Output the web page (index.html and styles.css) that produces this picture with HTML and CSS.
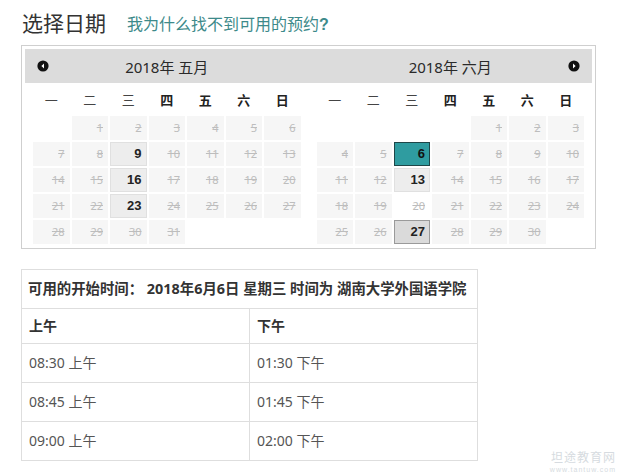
FILE: index.html
```html
<!DOCTYPE html>
<html>
<head>
<meta charset="utf-8">
<title>选择日期</title>
<link rel="stylesheet" href="styles.css">
</head>
<body>
<div class="page">
  <div class="title-row">
    <h1 class="title">选择日期</h1>
    <a class="help-link" href="#">我为什么找不到可用的预约<b>?</b></a>
  </div>

  <div class="calendar">
    <div class="cal-head">
      <div class="month-head">
        <span class="nav prev"><svg width="12" height="12" viewBox="0 0 12 12"><circle cx="6" cy="6" r="5.6" fill="#111"/><path d="M7 3.6 L4.4 6 L7 8.4 Z" fill="#fff"/></svg></span>
        <span class="month-title">2018年 五月</span>
        <span></span>
      </div>
      <div class="month-head">
        <span></span>
        <span class="month-title">2018年 六月</span>
        <span class="nav next"><svg width="12" height="12" viewBox="0 0 12 12"><circle cx="6" cy="6" r="5.6" fill="#111"/><path d="M5 3.6 L7.6 6 L5 8.4 Z" fill="#fff"/></svg></span>
      </div>
    </div>
    <div class="cal-body">
      <div class="month">
        <div class="weekdays">
          <span>一</span><span>二</span><span>三</span><span class="wk-b">四</span><span class="wk-b">五</span><span class="wk-b">六</span><span class="wk-b">日</span>
        </div>
        <div class="days">
          <span class="day empty"></span><span class="day">1</span><span class="day">2</span><span class="day">3</span><span class="day">4</span><span class="day">5</span><span class="day">6</span>
          <span class="day">7</span><span class="day">8</span><span class="day open">9</span><span class="day">10</span><span class="day">11</span><span class="day">12</span><span class="day">13</span>
          <span class="day">14</span><span class="day">15</span><span class="day open">16</span><span class="day">17</span><span class="day">18</span><span class="day">19</span><span class="day">20</span>
          <span class="day">21</span><span class="day">22</span><span class="day open">23</span><span class="day">24</span><span class="day">25</span><span class="day">26</span><span class="day">27</span>
          <span class="day">28</span><span class="day">29</span><span class="day">30</span><span class="day">31</span><span class="day empty"></span><span class="day empty"></span><span class="day empty"></span>
        </div>
      </div>
      <div class="month">
        <div class="weekdays">
          <span>一</span><span>二</span><span>三</span><span class="wk-b">四</span><span class="wk-b">五</span><span class="wk-b">六</span><span class="wk-b">日</span>
        </div>
        <div class="days">
          <span class="day empty"></span><span class="day empty"></span><span class="day empty"></span><span class="day empty"></span><span class="day">1</span><span class="day">2</span><span class="day">3</span>
          <span class="day">4</span><span class="day">5</span><span class="day open selected">6</span><span class="day">7</span><span class="day">8</span><span class="day">9</span><span class="day">10</span>
          <span class="day">11</span><span class="day">12</span><span class="day open">13</span><span class="day">14</span><span class="day">15</span><span class="day">16</span><span class="day">17</span>
          <span class="day">18</span><span class="day">19</span><span class="day plain">20</span><span class="day">21</span><span class="day">22</span><span class="day">23</span><span class="day">24</span>
          <span class="day">25</span><span class="day">26</span><span class="day open dark">27</span><span class="day">28</span><span class="day">29</span><span class="day">30</span><span class="day empty"></span>
        </div>
      </div>
    </div>
  </div>

  <table class="times">
    <tr><th class="caption" colspan="2">可用的开始时间： 2018年6月6日 星期三 时间为 湖南大学外国语学院</th></tr>
    <tr class="period-row"><th>上午</th><th>下午</th></tr>
    <tr><td>08:30 上午</td><td>01:30 下午</td></tr>
    <tr><td>08:45 上午</td><td>01:45 下午</td></tr>
    <tr><td>09:00 上午</td><td>02:00 下午</td></tr>
  </table>
</div>

<div class="watermark">
  <div class="wm-name">坦途教育网</div>
  <div class="wm-url">www.tantuw.com</div>
</div>
</body>
</html>
```

FILE: styles.css
```css
html, body {
  margin: 0;
  padding: 0;
  background: #fff;
}

body {
  font-family: "Noto Sans", "Noto Sans CJK SC", sans-serif;
  color: #333;
  position: relative;
  width: 620px;
  height: 475px;
  overflow: hidden;
}

.page {
  padding-left: 21px;
  width: 575px;
}

.title-row {
  height: 45px;
  display: flex;
  align-items: center;
  gap: 21px;
}

.title {
  margin: 0;
  padding-left: 1px;
  font-family: "Noto Sans CJK SC", sans-serif;
  font-size: 21px;
  font-weight: normal;
  color: #333;
  line-height: 1;
}

.help-link {
  font-family: "Noto Sans CJK SC", sans-serif;
  font-size: 16px;
  color: #3d8a8a;
  text-decoration: none;
  padding-top: 1px;
}

.help-link b {
  font-family: "Liberation Sans", sans-serif;
  font-weight: bold;
}

/* calendar */
.calendar {
  box-sizing: border-box;
  width: 575px;
  border: 1px solid #cfcfcf;
  padding: 3px 3px 4px;
}

.cal-head {
  background: #dcdcdc;
  height: 34px;
  display: flex;
  gap: 16px;
  padding: 0 8px;
}

.month-head {
  flex: 1;
  display: grid;
  grid-template-columns: 20px 1fr 20px;
  align-items: center;
}

.month-title {
  text-align: center;
  font-family: "Noto Sans", "Noto Sans CJK SC", sans-serif;
  font-size: 15px;
  color: #2a2a2a;
}

.nav {
  display: flex;
}

.nav.prev {
  justify-content: flex-start;
  padding-left: 4px;
}

.nav.next {
  justify-content: flex-end;
  padding-right: 4px;
}

.cal-body {
  display: flex;
  gap: 16px;
  padding: 0 8px;
}

.month {
  flex: 1;
}

.weekdays {
  height: 33px;
  display: grid;
  grid-template-columns: repeat(7, 1fr);
  gap: 2px;
  align-items: center;
  text-align: center;
  font-family: "Noto Sans CJK SC", sans-serif;
  font-size: 13px;
  color: #444;
}

.wk-b {
  font-weight: bold;
  color: #222;
}

.days {
  display: grid;
  grid-template-columns: repeat(7, 1fr);
  grid-auto-rows: 24px;
  gap: 2px;
}

.day {
  background: #f6f6f6;
  text-align: right;
  padding-right: 5px;
  line-height: 24px;
  font-family: "Noto Sans", sans-serif;
  font-size: 11px;
  color: #bdbdbd;
  text-decoration: line-through;
}

.day.empty,
.day.plain {
  background: transparent;
}

.day.open {
  background: #ededed;
  box-shadow: inset 0 0 0 1px #e0e0e0;
  color: #222;
  font-family: "Liberation Sans", sans-serif;
  font-weight: bold;
  font-size: 13px;
  text-decoration: none;
}

.day.selected {
  background: #2f9ca0;
  box-shadow: inset 0 0 0 1px #1e4648;
  color: #111;
}

.day.dark {
  background: #dadada;
  box-shadow: inset 0 0 0 1px #9a9a9a;
}

/* times table */
.times {
  margin-top: 20px;
  width: 457px;
  border-collapse: collapse;
  table-layout: fixed;
  font-family: "Noto Sans", "Noto Sans CJK SC", sans-serif;
}

.times th,
.times td {
  border: 1px solid #dedede;
  text-align: left;
  padding: 10px 7px;
  line-height: 18px;
  font-size: 14px;
}

.times th {
  color: #333;
  font-weight: bold;
}

.times th.caption {
  font-size: 14.4px;
  padding-left: 6px;
  padding-right: 2px;
  white-space: nowrap;
}

.times .period-row th {
  padding-top: 8px;
  padding-bottom: 8px;
}

.times td {
  color: #555;
}

/* watermark overlay */
.watermark {
  position: absolute;
  right: 4px;
  bottom: 1px;
  display: flex;
  flex-direction: column;
  align-items: flex-end;
  gap: 1px;
  color: #d6dbe0;
}

.wm-name {
  font-family: "Noto Sans CJK SC", sans-serif;
  font-size: 12px;
  line-height: 16px;
  letter-spacing: 1px;
}

.wm-url {
  font-family: "Liberation Sans", sans-serif;
  font-size: 7px;
  line-height: 8px;
  letter-spacing: 1px;
}
```
